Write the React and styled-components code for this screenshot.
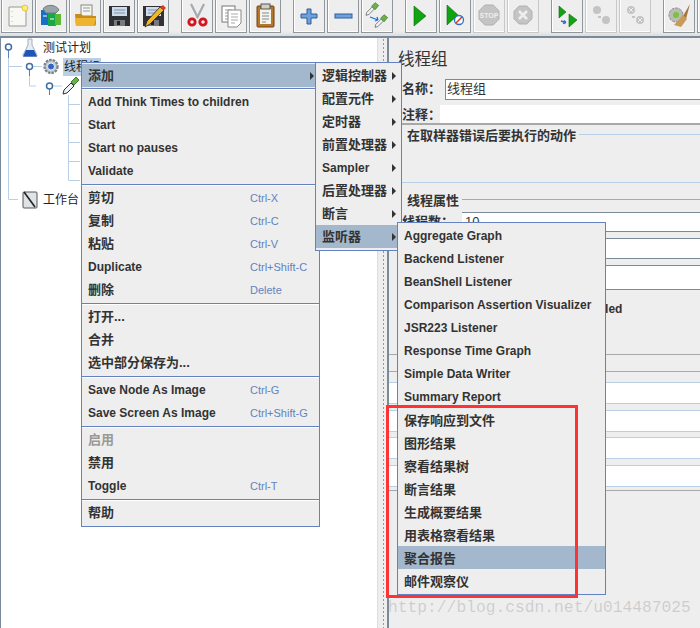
import styled, { createGlobalStyle } from "styled-components";

const GlobalStyle = createGlobalStyle`
  html, body {
    margin: 0;
    padding: 0;
    background: #eeeeee;
    overflow: hidden;
  }
`;

const FONT = `"Liberation Sans", "Noto Sans CJK SC", sans-serif`;
const hasCjk = (text) => /[\u4e00-\u9fff]/.test(text);

/* toolbar icons */
const Doc = ({ x, y, w = 13, h = 16 }) => (
  <g>
    <rect x={x} y={y} width={w} height={h} fill="#fff" stroke="#777" />
    <path
      d={`M${x + 3} ${y + 4}h${w - 6}M${x + 3} ${y + 7}h${w - 6}M${x + 3} ${y + 10}h${w - 6}M${x + 3} ${y + 13}h${w - 6}`}
      stroke="#999"
    />
  </g>
);

const Floppy = () => (
  <g>
    <path d="M6 6h21v20H6z" fill="#2f3136" />
    <rect x="9" y="7" width="15" height="9" fill="#cfdbe8" />
    <path d="M11 10h11M11 13h11" stroke="#7c93b0" />
    <rect x="11" y="20" width="11" height="6" fill="#777b80" />
    <rect x="14" y="21" width="3" height="4" fill="#222" />
  </g>
);

const Triangle = ({ d }) => (
  <path d={d} fill="#12a312" stroke="#0b6d0b" strokeWidth="0.6" />
);

const Dropper = ({ x, y, s = 1 }) => (
  <g transform={`translate(${x} ${y}) scale(${s})`}>
    <path d="M1 15l8-8 3 3-8 8-4 1z" fill="#eef2f5" stroke="#555" />
    <path d="M8 6l5-5 5 4-5 6z" fill="#6cb04a" stroke="#3d7a2b" />
  </g>
);

const Octagon = ({ cx, cy, r, fill = "#c4c4c4" }) => {
  const a = r * 0.42;
  return (
    <path
      d={`M${cx - a} ${cy - r}h${2 * a}l${r - a} ${r - a}v${2 * a}l${a - r} ${r - a}h${-2 * a}l${a - r} ${a - r}v${-2 * a}z`}
      fill={fill}
      stroke="#b0b0b0"
    />
  );
};

const toolIcons = {
  fresh: (
    <>
      <path d="M8 7h17v19H8z" fill="#f8f8f4" stroke="#9a9a94" />
      <path d="M11 11v1M11 16v1M11 21v1" stroke="#bbb" />
      <circle cx="24" cy="8" r="3" fill="#f7ec7c" stroke="#e0c940" />
    </>
  ),
  templates: (
    <>
      <rect x="6" y="10" width="8" height="15" fill="#1b6fc2" />
      <rect x="13" y="12" width="8" height="14" fill="#18a84a" />
      <rect x="20" y="14" width="6" height="11" fill="#5cbb32" />
      <path d="M8 9c3-5 13-5 16 1l-3 3H11z" fill="#98a6a8" stroke="#778" />
      <path d="M8 16h4M15 19h4" stroke="#fff" />
    </>
  ),
  open: (
    <>
      <rect x="12" y="5" width="11" height="11" fill="#f5f5f0" stroke="#888" />
      <path d="M14 8h7M14 11h7" stroke="#999" />
      <path d="M6 14h6l2 2h13v8a2 2 0 0 1-2 2H7z" fill="#c98a1d" />
      <path d="M6 18h21l-2 8H7z" fill="#eeb32f" />
    </>
  ),
  save: <Floppy />,
  saveAs: (
    <>
      <Floppy />
      <path d="M8 27l2-6L23 7l4 3-14 14z" fill="#f0b72c" stroke="#222" strokeWidth="0.8" />
      <path d="M23 7l3-2 3 3-2 2z" fill="#d63a2a" />
    </>
  ),
  cut: (
    <>
      <path d="M10 4l7 14M23 4l-7 14" stroke="#a4abb0" strokeWidth="2.2" />
      <circle cx="11" cy="22" r="3.200" fill="none" stroke="#d3141c" strokeWidth="2.800" />
      <circle cx="22" cy="22" r="3.200" fill="none" stroke="#d3141c" strokeWidth="2.800" />
    </>
  ),
  copy: (
    <>
      <Doc x={7} y={6} w={13} h={16} />
      <path d="M13 10h13v13l-4 4h-9z" fill="#fff" stroke="#888" />
      <path d="M16 14h7M16 17h7M16 20h7M16 23h4" stroke="#aaa" />
    </>
  ),
  paste: (
    <>
      <rect x="8" y="6" width="17" height="21" rx="1" fill="#b5752a" stroke="#6e4312" />
      <rect x="11" y="9" width="11" height="15" fill="#f4f4ee" />
      <rect x="12" y="4" width="9" height="5" fill="#d0d0c8" stroke="#555" />
      <path d="M13 13h7M13 16h7M13 19h7M13 22h4" stroke="#888" />
    </>
  ),
  plus: <path d="M14 9h4v5h6v4h-6v6h-4v-6H8v-4h6z" fill="#6ea1dc" stroke="#2e5f9e" />,
  minus: <rect x="8" y="14" width="17" height="4" fill="#6ea1dc" stroke="#2e5f9e" />,
  toggle: (
    <>
      <Dropper x={5} y={2} s={0.7} />
      <Dropper x={14} y={14} s={0.7} />
      <path d="M9 17l8 3M17 20l-1-3M17 20l-3 1" stroke="#1c6fe0" strokeWidth="1.300" fill="none" />
    </>
  ),
  start: <Triangle d="M9 6l12 10-12 10z" />,
  startNoPause: (
    <>
      <Triangle d="M8 5l11 10-11 10z" />
      <circle cx="20" cy="20" r="4.500" fill="#fff" stroke="#2f6fc7" strokeWidth="1.300" />
      <path d="M17 23l6-6" stroke="#e0301e" strokeWidth="1.400" />
    </>
  ),
  stop: (
    <>
      <Octagon cx={16} cy={15} r={10} />
      <text x="16" y="17.500" textAnchor="middle" fontFamily="Liberation Sans" fontSize="7" fontWeight="700" fill="#eee">
        STOP
      </text>
    </>
  ),
  shutdown: (
    <>
      <Octagon cx={16} cy={15} r={9} />
      <path d="M12 11l8 8M20 11l-8 8" stroke="#eee" strokeWidth="2.600" />
    </>
  ),
  remoteStart: (
    <>
      <Triangle d="M8 6l7 6-7 6z" />
      <Triangle d="M18 14l8 6-8 7z" />
      <path d="M10 21l5 1.500M15 22.500l-2-2M15 22.500l-3 1" stroke="#2f6fc7" strokeWidth="1.400" fill="none" />
    </>
  ),
  remoteStop: (
    <>
      <circle cx="12" cy="10" r="4" fill="#c4c4c4" />
      <circle cx="21" cy="20" r="4" fill="#c4c4c4" />
      <path d="M13 17h3" stroke="#c4c4c4" strokeWidth="2" />
    </>
  ),
  remoteShutdown: (
    <>
      <circle cx="12" cy="10" r="4" fill="#c4c4c4" />
      <circle cx="21" cy="20" r="4" fill="#c4c4c4" />
      <path d="M10 8l4 4M14 8l-4 4M19 18l4 4M23 18l-4 4" stroke="#eee" />
      <path d="M13 17h3" stroke="#c4c4c4" strokeWidth="2" />
    </>
  ),
  clear: (
    <>
      <circle cx="13" cy="15" r="7" fill="#b9bdb7" stroke="#8a8d88" strokeDasharray="3 1" />
      <circle cx="13" cy="15" r="3" fill="#7dc23c" />
      <path d="M27 4l-7 12 3 3z" fill="#a8763a" />
      <path d="M20 15l4 4-6 8-7-2z" fill="#c99a5c" />
    </>
  ),
  log: <Doc x={4} y={6} w={12} h={18} />,
};

const toolGroups = [
  [
    { icon: "fresh" },
    { icon: "templates" },
    { icon: "open" },
    { icon: "save" },
    { icon: "saveAs" },
  ],
  [{ icon: "cut" }, { icon: "copy" }, { icon: "paste" }],
  [{ icon: "plus" }, { icon: "minus" }, { icon: "toggle" }],
  [
    { icon: "start" },
    { icon: "startNoPause" },
    { icon: "stop", off: true },
    { icon: "shutdown", off: true },
  ],
  [
    { icon: "remoteStart" },
    { icon: "remoteStop", off: true },
    { icon: "remoteShutdown", off: true },
  ],
  [{ icon: "clear" }, { icon: "log" }],
];

const mainMenu = [
  { label: "添加", arrow: true, active: true },
  { sep: true, first: true },
  { label: "Add Think Times to children" },
  { label: "Start" },
  { label: "Start no pauses" },
  { label: "Validate" },
  { sep: true },
  { label: "剪切", key: "Ctrl-X" },
  { label: "复制", key: "Ctrl-C" },
  { label: "粘贴", key: "Ctrl-V" },
  { label: "Duplicate", key: "Ctrl+Shift-C" },
  { label: "删除", key: "Delete" },
  { sep: true },
  { label: "打开..." },
  { label: "合并" },
  { label: "选中部分保存为..." },
  { sep: true },
  { label: "Save Node As Image", key: "Ctrl-G" },
  { label: "Save Screen As Image", key: "Ctrl+Shift-G" },
  { sep: true },
  { label: "启用", off: true },
  { label: "禁用" },
  { label: "Toggle", key: "Ctrl-T" },
  { sep: true },
  { label: "帮助" },
];

const addMenu = [
  { label: "逻辑控制器", arrow: true },
  { label: "配置元件", arrow: true },
  { label: "定时器", arrow: true },
  { label: "前置处理器", arrow: true },
  { label: "Sampler", arrow: true },
  { label: "后置处理器", arrow: true },
  { label: "断言", arrow: true },
  { label: "监听器", arrow: true, active: true },
];

const listenerMenu = [
  { label: "Aggregate Graph" },
  { label: "Backend Listener" },
  { label: "BeanShell Listener" },
  { label: "Comparison Assertion Visualizer" },
  { label: "JSR223 Listener" },
  { label: "Response Time Graph" },
  { label: "Simple Data Writer" },
  { label: "Summary Report" },
  { label: "保存响应到文件" },
  { label: "图形结果" },
  { label: "察看结果树" },
  { label: "断言结果" },
  { label: "生成概要结果" },
  { label: "用表格察看结果" },
  { label: "聚合报告", active: true },
  { label: "邮件观察仪" },
];

const PopupMenu = ({ items, left, top, width, keyColumn, lift }) => (
  <Menu $left={left} $top={top} $width={width}>
    {items.map((item, i) =>
      item.sep ? (
        <Separator key={i} $first={item.first} />
      ) : (
        <MenuItem key={i} $active={item.active} $off={item.off}>
          <MenuLabel $cjk={hasCjk(item.label)} $lift={lift} $column={keyColumn}>
            {item.label}
          </MenuLabel>
          {item.key && <Shortcut>{item.key}</Shortcut>}
          {item.arrow && <Arrow />}
        </MenuItem>
      ),
    )}
  </Menu>
);

export default function App() {
  return (
    <Page>
      <GlobalStyle />
      <Toolbar>
        {toolGroups.map((group, g) => (
          <ToolGroup key={g}>
            {group.map((tool) => (
              <ToolButton key={tool.icon} $off={tool.off}>
                <svg width="32" height="32" viewBox="0 0 32 32">
                  {toolIcons[tool.icon]}
                </svg>
              </ToolButton>
            ))}
          </ToolGroup>
        ))}
      </Toolbar>

      <Workspace>
        <TreePane>
          <TreeLines width="377" height="200" viewBox="0 0 377 200">
            <path
              d="M8.500 14V161.500H18M29.500 33V48M29.500 48H36M49.500 52V48M68.500 57V142.500M68.500 66.500H80M68.500 85.500H80M68.500 104.500H80M68.500 123.500H80M68.500 142.500H80M8.500 28.500H22M29.500 28.500H42M49.500 48H62"
              stroke="#b8cfe5"
              fill="none"
            />
            <path d="M8.500 12V20M29.500 31V38M49.500 50V57" stroke="#5a7fb0" />
            <circle cx="8.500" cy="9" r="3" fill="#fff" stroke="#3f6ea8" strokeWidth="1.500" />
            <circle cx="29.500" cy="28.500" r="3" fill="#fff" stroke="#3f6ea8" strokeWidth="1.500" />
            <circle cx="49.500" cy="48" r="3" fill="#fff" stroke="#3f6ea8" strokeWidth="1.500" />
          </TreeLines>
          <TreeRow $depth={0}>
            <svg width="16" height="19" viewBox="0 0 16 19">
              <path d="M6 1h4v6l5 10a1 1 0 0 1-1 1.500H2a1 1 0 0 1-1-1.500l5-10z" fill="#e8edf2" stroke="#a4b0bb" />
              <path d="M4 12h8l3 6.500H1z" fill="#1d56b8" />
            </svg>
            <TreeLabel>测试计划</TreeLabel>
          </TreeRow>
          <TreeRow $depth={1} $gap={3}>
            <svg width="18" height="19" viewBox="0 0 18 19">
              <circle cx="9" cy="9.500" r="6.500" fill="#c9ced3" stroke="#7b858e" strokeWidth="2.400" strokeDasharray="2.500 1" />
              <circle cx="9" cy="9.500" r="3.500" fill="#3166c4" stroke="#e8edf2" />
            </svg>
            <TreeLabel $selected>线程组</TreeLabel>
          </TreeRow>
          <TreeRow $depth={2}>
            <svg width="18" height="19" viewBox="0 0 18 19">
              <path d="M1 18l1-4 7-7 3 3-7 7z" fill="#eef2f5" stroke="#333" />
              <path d="M9 6l5-5 3 3-5 5z" fill="#6cb04a" stroke="#3d7a2b" />
            </svg>
          </TreeRow>
          <TreeGap />
          <TreeRow $depth={0}>
            <svg width="16" height="19" viewBox="0 0 16 19">
              <rect x="1" y="2" width="14" height="16" rx="1" fill="#dfe3e6" stroke="#555" />
              <path d="M2 2l11 15" stroke="#222" strokeWidth="1.600" />
            </svg>
            <TreeLabel>工作台</TreeLabel>
          </TreeRow>
        </TreePane>

        <Splitter>
          <SplitterDots />
        </Splitter>

        <DetailPane>
          <DetailTitle>线程组</DetailTitle>
          <NameRow>
            <FormLabel $width={56}>名称：</FormLabel>
            <NameInput>线程组</NameInput>
          </NameRow>
          <CommentRow>
            <FormLabel $width={51}>注释：</FormLabel>
            <CommentInput />
          </CommentRow>
          <ErrorSection>
            <Legend>
              <LegendText>在取样器错误后要执行的动作</LegendText>
              <LegendLine $color="#b8cfe5" />
            </Legend>
          </ErrorSection>
          <ThreadSection>
            <Legend>
              <LegendText>线程属性</LegendText>
              <LegendLine $color="#a8a8a8" />
            </Legend>
            <ThreadRow $top={3}>
              <FormLabel $width={73}>线程数：</FormLabel>
              <ThreadInput $height={20}>10</ThreadInput>
            </ThreadRow>
            <ThreadRow $top={6}>
              <FormLabel $width={73} />
              <ThreadInput $height={21} />
            </ThreadRow>
            <ThreadRow $top={6}>
              <FormLabel $width={73} />
              <ThreadInput $height={25} />
            </ThreadRow>
            <DelayNote>Delay Thread creation until needed</DelayNote>
          </ThreadSection>
          <SectionRule $top={35} />
          <SectionRule $top={16} />
          <SchedulerFields>
            <SchedulerField />
            <SchedulerField />
            <SchedulerField />
            <SchedulerField />
          </SchedulerFields>
          <SectionRule $top={3} />
        </DetailPane>
      </Workspace>

      <PopupMenu items={mainMenu} left={81} top={62} width={239} keyColumn={162} lift />
      <PopupMenu items={addMenu} left={315} top={62} width={87} lift />
      <PopupMenu items={listenerMenu} left={397} top={222} width={209} />
      <RedMark />
      <Watermark>http://blog.csdn.net/u014487025</Watermark>
    </Page>
  );
}

const Page = styled.div`
  position: relative;
  width: 700px;
  height: 628px;
  overflow: hidden;
  background: #eeeeee;
  font-family: ${FONT};
  color: #333333;
`;

const Toolbar = styled.div`
  display: flex;
  gap: 12px;
  height: 36px;
  padding-left: 1px;
  box-sizing: border-box;
  background: linear-gradient(#eeeeee 85%, #dddddd);
`;

const ToolGroup = styled.div`
  display: flex;
  gap: 2px;
`;

const ToolButton = styled.div`
  flex: none;
  width: 32px;
  height: 33px;
  box-sizing: border-box;
  border: 1px solid ${(p) => (p.$off ? "#c8c8c8" : "#8f989f")};
  border-top: none;
  background: #eeeeee;
  box-shadow: inset 1px 0 #ffffff, inset 0 -1px #ffffff;
  display: flex;
  align-items: center;
  justify-content: center;

  svg {
    flex: none;
    margin: -1px;
  }
`;

const Workspace = styled.div`
  display: flex;
  height: 592px;
  box-sizing: border-box;
  border-top: 2px solid #7a8a99;
`;

const TreePane = styled.div`
  position: relative;
  width: 377px;
  box-sizing: border-box;
  border-left: 1px solid #7a8a99;
  background: #ffffff;
`;

const TreeLines = styled.svg`
  position: absolute;
  left: -1px;
  top: 0;
`;

const TreeRow = styled.div`
  position: relative;
  display: flex;
  align-items: center;
  height: 19px;
  padding-left: ${(p) => 21 + p.$depth * 20}px;
  gap: ${(p) => p.$gap ?? 4}px;

  svg {
    flex: none;
  }
`;

const TreeLabel = styled.span`
  padding: 0 1px;
  font-size: 12px;
  line-height: 18px;
  color: #222222;
  background: ${(p) => (p.$selected ? "#b8cfe5" : "transparent")};
`;

const TreeGap = styled.div`
  height: 95px;
`;

const Splitter = styled.div`
  width: 10px;
  background: #eeeeee;
  display: flex;
  justify-content: center;
  box-shadow: inset 1px 0 #dddddd;
`;

const SplitterDots = styled.div`
  width: 3px;
  margin-left: 2px;
  background-image: radial-gradient(circle, #7f99c4 0.7px, transparent 0.8px);
  background-size: 3px 4px;
`;

const DetailPane = styled.div`
  flex: 1;
  display: flex;
  flex-direction: column;
  min-width: 0;
  border-left: 2px solid #7a8a99;
  background: #eeeeee;
`;

const DetailTitle = styled.div`
  height: 41px;
  padding-left: 9px;
  font-size: 16.500px;
  line-height: 43px;
  color: #333333;
`;

const NameRow = styled.div`
  display: flex;
  height: 21px;
`;

const CommentRow = styled.div`
  display: flex;
  height: 18px;
  margin-top: 5px;
`;

const FormLabel = styled.div`
  flex: none;
  width: ${(p) => p.$width}px;
  box-sizing: border-box;
  padding-left: 13px;
  font-size: 13px;
  font-weight: 700;
  line-height: 19px;
  white-space: nowrap;
  overflow: hidden;
`;

const NameInput = styled.div`
  flex: 1;
  box-sizing: border-box;
  background: #ffffff;
  border: 1px solid #7a8a99;
  border-right: none;
  padding-left: 1px;
  font-size: 13px;
  line-height: 18px;
`;

const CommentInput = styled.div`
  flex: 1;
  background: #ffffff;
`;

const ErrorSection = styled.div`
  height: 60px;
  box-sizing: border-box;
  border-top: 2px solid #a8a8a8;
  border-bottom: 1px solid #b8cfe5;
`;

const Legend = styled.div`
  display: flex;
  align-items: center;
  gap: 3px;
  padding-left: 18px;
  height: 19px;
`;

const LegendText = styled.span`
  font-size: 13px;
  font-weight: 700;
  white-space: nowrap;
`;

const LegendLine = styled.span`
  flex: 1;
  height: 1px;
  background: ${(p) => p.$color};
`;

const ThreadSection = styled.div`
  display: flex;
  flex-direction: column;
  padding-top: 7px;
`;

const ThreadRow = styled.div`
  display: flex;
  margin-top: ${(p) => p.$top}px;
`;

const ThreadInput = styled.div`
  flex: 1;
  height: ${(p) => p.$height}px;
  box-sizing: border-box;
  background: #ffffff;
  border-top: 1px solid #7a8a99;
  border-bottom: 1px solid #7a8a99;
  padding-left: 3px;
  font-size: 13px;
  line-height: 17px;
`;

const DelayNote = styled.div`
  margin: 10px 0 0 34px;
  font-size: 12px;
  font-weight: 700;
  line-height: 19px;
  white-space: nowrap;
`;

const SectionRule = styled.div`
  flex: none;
  height: 1px;
  margin-top: ${(p) => p.$top}px;
  background: #a8a8a8;
`;

const SchedulerFields = styled.div`
  display: flex;
  flex-direction: column;
  gap: 5.500px;
  margin-top: 10px;
`;

const SchedulerField = styled.div`
  height: 22px;
  box-sizing: border-box;
  background: #ffffff;
  border-top: 1px solid #b8cfe5;
  border-bottom: 1px solid #b8cfe5;
`;

const Menu = styled.div`
  position: absolute;
  left: ${(p) => p.$left}px;
  top: ${(p) => p.$top}px;
  width: ${(p) => p.$width}px;
  box-sizing: border-box;
  border: 1px solid #6382bf;
  padding: 1px 0 2px;
  background: #eeeeee;
`;

const MenuItem = styled.div`
  display: flex;
  align-items: center;
  height: 23px;
  padding-left: 6px;
  background: ${(p) => (p.$active ? "#a3b8cc" : "transparent")};
  color: ${(p) => (p.$off ? "#999999" : "#333333")};
  white-space: nowrap;
`;

const MenuLabel = styled.span`
  flex: none;
  width: ${(p) => (p.$column ? `${p.$column}px` : "auto")};
  font-size: ${(p) => (p.$cjk ? 13 : 12)}px;
  font-weight: 700;
  margin-bottom: ${(p) => (p.$cjk && p.$lift ? 2 : 0)}px;
`;

const Shortcut = styled.span`
  font-size: 11px;
  color: #6382bf;
`;

const Arrow = styled.span`
  margin-left: auto;
  margin-right: 5px;
  width: 0;
  height: 0;
  border-left: 4px solid #333333;
  border-top: 4px solid transparent;
  border-bottom: 4px solid transparent;
`;

const Separator = styled.div`
  height: 1px;
  margin-top: ${(p) => (p.$first ? 1 : 2)}px;
  background: #6382bf;
  border-bottom: 1px solid #ffffff;
`;

const RedMark = styled.div`
  position: absolute;
  left: 386px;
  top: 405px;
  width: 192px;
  height: 193px;
  box-sizing: border-box;
  border: 3px solid #ff3333;
`;

const Watermark = styled.div`
  position: absolute;
  left: 388px;
  top: 598px;
  font-family: "Liberation Mono", monospace;
  font-size: 16.300px;
  line-height: 20px;
  color: rgba(120, 120, 120, 0.28);
  white-space: nowrap;
`;
